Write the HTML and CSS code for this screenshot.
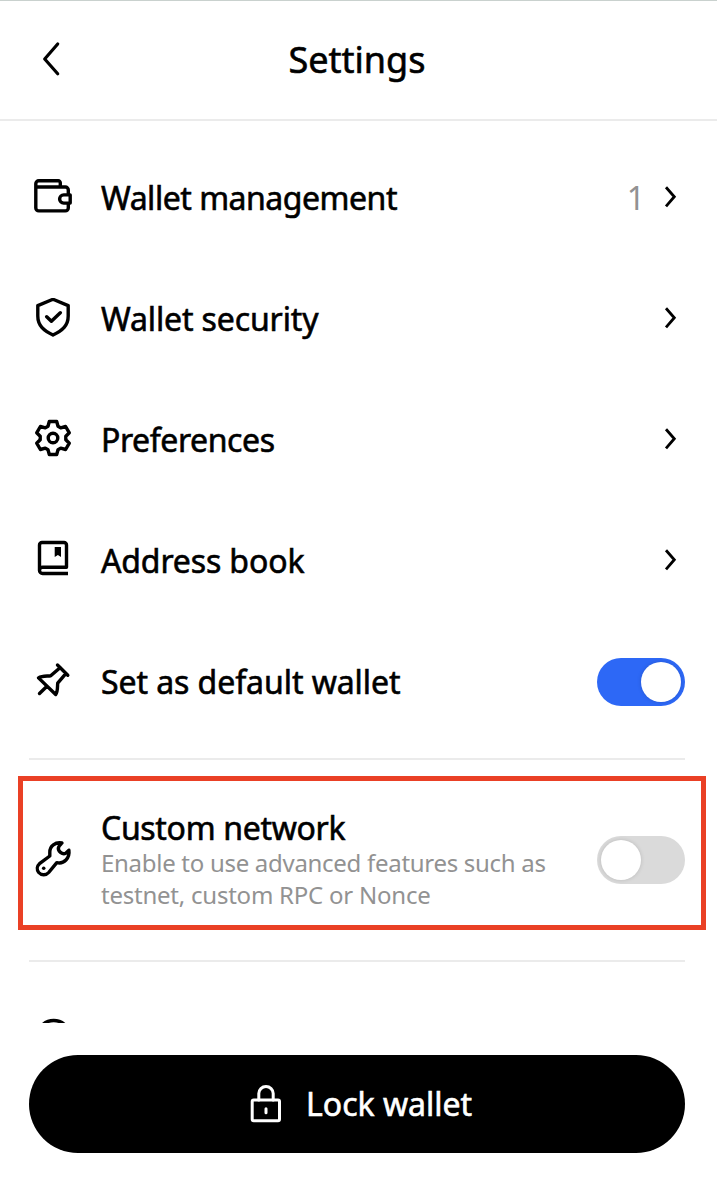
FILE: index.html
```html
<!DOCTYPE html>
<html lang="en">
<head>
<meta charset="utf-8">
<title>Settings</title>
<link rel="stylesheet" href="styles.css">
</head>
<body>
<div class="app">
  <header class="header">
    <svg class="back" viewBox="0 0 20 36"><path d="M16.7 3 3.7 18l13 14.7"/></svg>
    <h1 class="title">Settings</h1>
  </header>
  <main class="content">
    <div class="row">
      <svg class="icon" viewBox="0 0 40 41"><path d="M27.300 10V5.800a2 2 0 0 0-2-2H5.800a3 3 0 0 0-3 3v24.100a3 3 0 0 0 3 3h26.500a3 3 0 0 0 3-3V26.500M2.800 10h29.500a3 3 0 0 1 3 3v4.500M37.200 17.900h-6.500a4.100 4.100 0 0 0 0 8.200h6.500z"/></svg>
      <span class="label wm">Wallet management</span>
      <span class="count">1</span>
      <svg class="chevron" viewBox="0 0 14 25"><path d="m3 3.300 8.300 9.400L3 22.300"/></svg>
    </div>
    <div class="row">
      <svg class="icon" viewBox="0 0 40 41"><path d="m20 1.300 15.200 6.300V18c0 9.500-5.700 14.500-15.200 19C10.500 32.500 4.800 27.500 4.800 18V7.600zM13.700 18.700l4.700 4.600 8.900-8.600"/></svg>
      <span class="label ws">Wallet security</span>
      <svg class="chevron" viewBox="0 0 14 25"><path d="m3 3.300 8.300 9.400L3 22.300"/></svg>
    </div>
    <div class="row">
      <svg class="icon" viewBox="0 0 40 41"><path d="M16.300 2.500h7.400L25 7.300l2.700 1.600 4.900-1.400 3.700 6.300-3.500 3.500v3.400l3.500 3.500-3.700 6.300-4.900-1.400-2.700 1.600-1.300 4.800h-7.400L15 30.700l-2.700-1.600-4.900 1.400-3.700-6.300 3.500-3.500v-3.400l-3.500-3.500 3.700-6.300 4.900 1.400L15 7.300z"/><circle cx="20" cy="19" r="4.800"/></svg>
      <span class="label pr">Preferences</span>
      <svg class="chevron" viewBox="0 0 14 25"><path d="m3 3.300 8.300 9.400L3 22.300"/></svg>
    </div>
    <div class="row">
      <svg class="icon butt" viewBox="0 0 40 41"><path d="M6.500 30.500V5a2.500 2.500 0 0 1 2.500-2.500h22A2.500 2.500 0 0 1 33.500 5v22.300H9.600a3.100 3.100 0 0 0 0 6.200H35"/><path class="solid" d="M21.700 7H28v10l-3.100-2-3.200 2z"/></svg>
      <span class="label ab">Address book</span>
      <svg class="chevron" viewBox="0 0 14 25"><path d="m3 3.300 8.300 9.400L3 22.300"/></svg>
    </div>
    <div class="row">
      <svg class="icon" viewBox="0 0 40 41"><path d="m24.500 4 10.300 10.300M27.300 6.500l-9.600 8.300c-4 .5-8.500-.3-12.200 2.100l17.200 16.600c2.300-3.300 1.600-7.500 2-11.400l8.100-9.500M13.700 25.500l-7.200 7"/></svg>
      <span class="label sd">Set as default wallet</span>
      <span class="toggle on"></span>
    </div>
    <div class="divider"></div>
    <div class="highlight">
      <svg class="icon small" viewBox="0 0 40 40"><path d="M29 3C22.500 1.700 16.500 6 16.800 12.500V16L6.500 23.700A6.400 6.400 0 0 0 5.700 32.500 6.600 6.600 0 0 0 15.700 32.500l8.100-9.900C31 24.500 37 18 35.900 10.300l-3.200 2.900C29.500 15 24.500 11 25.500 7.500 26.200 5.200 27.700 4.500 29 3z"/><circle class="solid" cx="10.700" cy="28.300" r="1.800"/></svg>
      <div class="text">
        <span class="label cn">Custom network</span>
        <p class="desc"><span class="d1">Enable to use advanced features such as</span><br><span class="d2">testnet, custom RPC or Nonce</span></p>
      </div>
      <span class="toggle"></span>
    </div>
    <div class="divider second"></div>
    <div class="row">
      <svg class="icon" viewBox="0 0 40 41"><circle cx="20.700" cy="20" r="16.500"/></svg>
    </div>
  </main>
  <footer class="footer">
    <button class="lock">
      <svg class="icon small" viewBox="0 0 40 40"><rect x="6.200" y="16.100" width="27.300" height="20.600" rx="1.500"/><path d="M12.800 16V9.500a7.200 7 0 0 1 14.400 0V16M20 24.700v4"/></svg>
      <span class="lw">Lock wallet</span>
    </button>
  </footer>
</div>
</body>
</html>
```
FILE: styles.css
```css
* { box-sizing: border-box; }
body { margin: 0; background: #fff; color: #000; font-family: "Noto Sans", sans-serif; font-weight: 400; }
.app { height: 1195px; display: flex; flex-direction: column; border-top: 1px solid #c9d1ce; }
.header { height: 120px; border-bottom: 2px solid #ebebeb; display: grid; grid-template-columns: 41px 1fr 61px; align-items: center; flex: none; }
svg { fill: none; stroke: #000; stroke-width: 3.400; stroke-linecap: round; stroke-linejoin: round; flex: none; }
.back { width: 20px; height: 36px; margin: 0 0 2px 41px; stroke-width: 3.200; }
.title { margin: 0; padding-left: 17px; text-align: center; font-size: 36px; font-weight: 400; line-height: 48px; white-space: nowrap; }
.title, .label, .lw { -webkit-text-stroke: .6px currentColor; }
.content { height: 902px; flex: none; overflow: hidden; padding-top: 16px; }
.row { height: 121px; display: flex; align-items: center; padding: 0 32px 0 33px; }
.icon { width: 40px; height: 41px; margin-right: 28px; }
.icon.small { height: 40px; }
.butt { stroke-linecap: butt; }
.solid { fill: #000; stroke: none; }
.label { flex: 1; font-size: 32px; line-height: 40px; white-space: nowrap; }
.wm { letter-spacing: -.48px; }
.ws { letter-spacing: -.13px; }
.pr { letter-spacing: -.42px; }
.ab { letter-spacing: -.13px; }
.sd { letter-spacing: -.07px; }
.cn { letter-spacing: -.32px; }
.count { color: #929292; font-size: 32px; line-height: 40px; margin-right: 18px; }
.chevron { width: 14px; height: 25px; margin: 0 8px 2px 0; stroke-width: 2.800; stroke-linecap: butt; stroke-linejoin: miter; }
.toggle { flex: none; width: 88px; height: 48px; padding: 4px; border-radius: 24px; background: #dadada; display: flex; }
.toggle::before { content: ""; width: 40px; height: 40px; border-radius: 50%; background: #fff; box-shadow: 0 0 4px rgba(0,0,0,.15); }
.toggle.on { background: #2d68f6; justify-content: flex-end; }
.divider { height: 2px; margin: 16px 32px 16px 29px; background: #ebebeb; }
.divider.second { margin: 30px 32px 15px 29px; }
.highlight { height: 154px; margin: 0 11px 0 18px; border: 5px solid #ea4025; padding: 14px 16px 0 10px; display: flex; align-items: center; }
.text { flex: 1; display: flex; flex-direction: column; white-space: nowrap; }
.desc { margin: -1px 0 1px; color: #929292; font-size: 24px; line-height: 32px; }
.d1 { letter-spacing: -.29px; }
.d2 { letter-spacing: -.23px; }
.footer { padding: 32px 32px 0 29px; }
.lock { width: 100%; height: 98px; border: 0; border-radius: 49px; padding: 0 0 0 217px; background: #000; color: #fff; display: flex; align-items: center; font: 400 32px/40px "Noto Sans", sans-serif; white-space: nowrap; }
.lock .icon { stroke: #fff; stroke-width: 3; margin-right: 20px; }
```
